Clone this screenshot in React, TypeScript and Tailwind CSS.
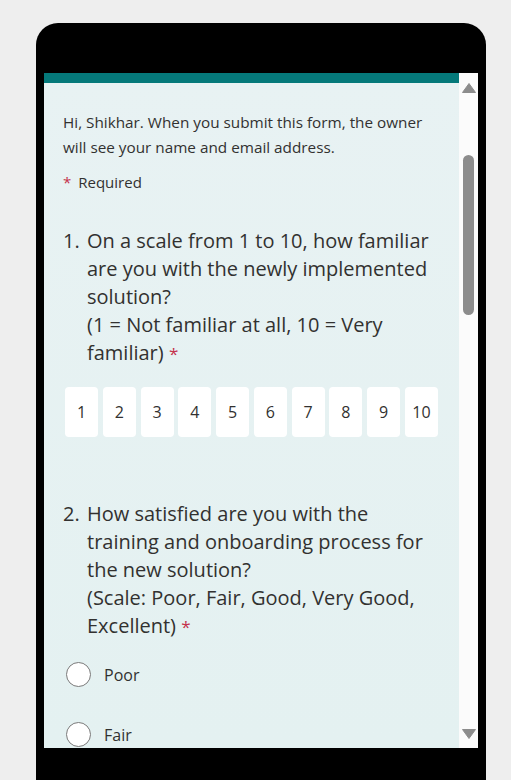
const font = { fontFamily: '"Open Sans", "Noto Sans", sans-serif' };

function ScrollBar() {
  return (
    <div className="w-[19px] bg-[#fbfbfb] flex flex-col items-center justify-between pt-[10px] pb-[9px]">
      <svg width="14" height="10" viewBox="0 0 14 10">
        <path d="M7 0.5 L13.5 9.5 L0.5 9.5 Z" fill="#8c8c8c" stroke="#8c8c8c" strokeLinejoin="round" />
      </svg>
      <div className="flex-1 w-full flex flex-col items-center pt-[62px]">
        <div className="w-[11px] h-[160px] rounded-full bg-[#8c8c8c]" />
      </div>
      <svg width="14" height="10" viewBox="0 0 14 10">
        <path d="M0.5 0.5 L13.5 0.5 L7 9.5 Z" fill="#8c8c8c" stroke="#8c8c8c" strokeLinejoin="round" />
      </svg>
    </div>
  );
}

function Radio({ label }: { label: string }) {
  return (
    <div className="flex items-center h-[25px]">
      <span className="w-[25px] h-[25px] rounded-full border-[1.5px] border-[#7a7a7a] bg-white shrink-0" />
      <span className="ml-[13px] text-[16px] text-[#323130]">{label}</span>
    </div>
  );
}

export default function App() {
  const scale = [1, 2, 3, 4, 5, 6, 7, 8, 9, 10];

  return (
    <div className="w-full h-[780px] bg-[#eeeeee] overflow-hidden pt-[23px] px-[25px]" style={font}>
      <div className="w-[450px] h-[757px] overflow-hidden bg-black rounded-t-[22px] pt-[50px] px-[8px] ml-[11px]">
        <div className="flex h-[675px]">
          <div className="w-[415px] bg-gradient-to-b from-[#e8f2f3] to-[#e4f1f1] overflow-hidden">
            <div className="h-[10px] bg-[#05797a]" />
            <div className="pl-[19px] pr-[10px] pt-[27px] text-[#323130]">
              <p className="text-[15.3px] leading-[25px]">
                <span className="block whitespace-nowrap">Hi, Shikhar. When you submit this form, the owner</span>
                <span className="block">will see your name and email address.</span>
              </p>
              <p className="mt-[10px] text-[15px] leading-[25px]">
                <span className="text-[#c4314b] mr-[7px]">*</span>Required
              </p>

              <div className="mt-[32px] flex text-[20px] leading-[28px]">
                <span className="w-[24px] shrink-0">1.</span>
                <div className="whitespace-nowrap">
                  <span className="block">On a scale from 1 to 10, how familiar</span>
                  <span className="block">are you with the newly implemented</span>
                  <span className="block">solution?</span>
                  <span className="block">(1 = Not familiar at all, 10 = Very</span>
                  <span className="block">
                    familiar) <span className="text-[#c4314b] text-[17px]">*</span>
                  </span>
                </div>
              </div>

              <div className="mt-[19px] ml-[2px] w-[373px] flex justify-between">
                {scale.map((n) => (
                  <div
                    key={n}
                    className="w-[33px] h-[50px] bg-white rounded-[4px] flex items-center justify-center text-[16px] text-[#323130]"
                  >
                    {n}
                  </div>
                ))}
              </div>

              <div className="mt-[63px] flex text-[20px] leading-[28px]">
                <span className="w-[24px] shrink-0">2.</span>
                <div className="whitespace-nowrap">
                  <span className="block">How satisfied are you with the</span>
                  <span className="block">training and onboarding process for</span>
                  <span className="block">the new solution?</span>
                  <span className="block">(Scale: Poor, Fair, Good, Very Good,</span>
                  <span className="block">
                    Excellent) <span className="text-[#c4314b] text-[17px]">*</span>
                  </span>
                </div>
              </div>

              <div className="mt-[21px] ml-[3px] flex flex-col gap-[35px]">
                <Radio label="Poor" />
                <Radio label="Fair" />
              </div>
            </div>
          </div>
          <ScrollBar />
        </div>
      </div>
    </div>
  );
}
